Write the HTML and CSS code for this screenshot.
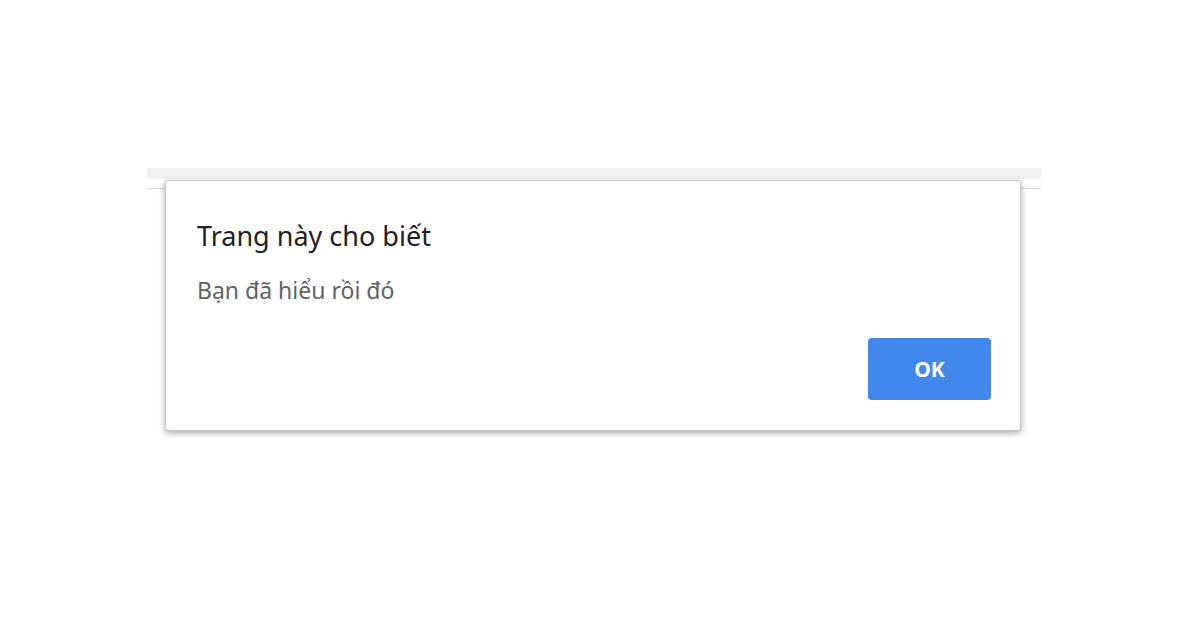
FILE: index.html
```html
<!DOCTYPE html>
<html lang="vi">
<head>
<meta charset="utf-8">
<title>Trang này cho biết</title>
<link rel="stylesheet" href="styles.css">
</head>
<body>
<div class="page">
  <div class="band"></div>
  <div class="rule"></div>
  <div class="dialog" role="alertdialog">
    <div class="title">Trang này cho biết</div>
    <div class="message">Bạn đã hiểu rồi đó</div>
    <div class="actions">
      <button class="ok">OK</button>
    </div>
  </div>
</div>
</body>
</html>
```
FILE: styles.css
```css
html, body {
  margin: 0;
  padding: 0;
  background: #ffffff;
}
body {
  width: 1200px;
  height: 628px;
  overflow: hidden;
  font-family: "Noto Sans", "Open Sans", sans-serif;
}
.page {
  position: relative;
  padding-top: 168px;
  height: 460px;
}
.band {
  margin-left: 147px;
  width: 894px;
  height: 11px;
  background: #f1f1f1;
}
.rule {
  margin-left: 147px;
  margin-top: 9px;
  width: 894px;
  height: 1px;
  background: #d6d6d6;
}
.dialog {
  position: absolute;
  left: 165px;
  top: 180px;
  width: 856px;
  height: 251px;
  box-sizing: border-box;
  background: #ffffff;
  border: 1px solid #c4c4c4;
  border-radius: 3px;
  box-shadow: 0 2px 6px rgba(0, 0, 0, 0.35);
  padding: 37px 29px 30px 31px;
  display: flex;
  flex-direction: column;
}
.title {
  font-size: 27px;
  line-height: 36px;
  color: #202124;
}
.message {
  margin-top: 21px;
  font-size: 23px;
  line-height: 30px;
  color: #5f6368;
}
.actions {
  margin-top: auto;
  display: flex;
  justify-content: flex-end;
}
.ok {
  width: 123px;
  height: 62px;
  border: none;
  border-radius: 4px;
  background: #4287ec;
  color: #ffffff;
  font-family: "Noto Sans", "Open Sans", sans-serif;
  font-weight: 700;
  font-size: 21px;
  padding: 0;
}
```
